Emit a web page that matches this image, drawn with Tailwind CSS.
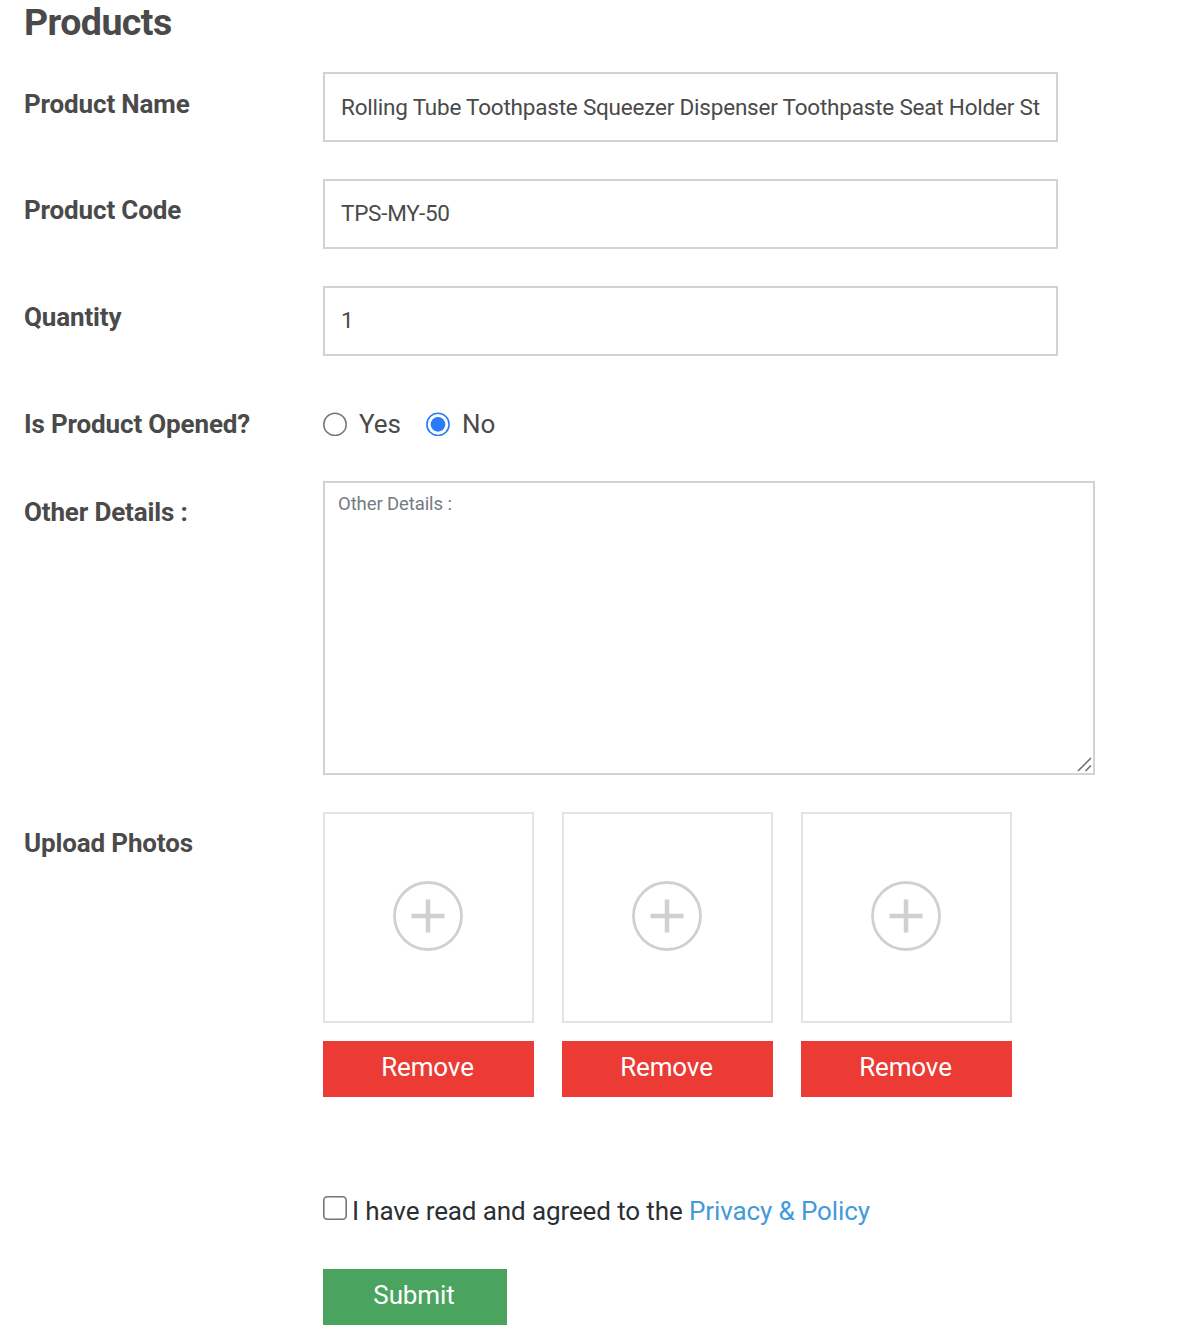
<!DOCTYPE html>
<html lang="en">
<head>
<meta charset="utf-8">
<title>Products</title>
<script src="https://cdn.jsdelivr.net/npm/@tailwindcss/browser@4"></script>
</head>
<body class="bg-white font-['Roboto',sans-serif] text-[#4a4a4a] w-[1188px] h-[1336px] overflow-hidden">
<form class="pl-6 text-[26px] leading-[38px]">
  <h1 class="h-[72px] pt-0.5 text-[37.5px] leading-10 font-bold tracking-[-0.55px]">Products</h1>
  <div class="flex h-[107px]">
    <label class="w-[299px] pt-[13px] font-bold tracking-[-0.15px]">Product Name</label>
    <div class="w-[735px] h-[70px] border-2 border-[#d2d2d2] px-4 text-[22.5px] leading-[66px] tracking-[-0.21px] whitespace-nowrap overflow-hidden">Rolling Tube Toothpaste Squeezer Dispenser Toothpaste Seat Holder St</div>
  </div>
  <div class="flex h-[107px]">
    <label class="w-[299px] pt-3 font-bold tracking-[-0.15px]">Product Code</label>
    <div class="w-[735px] h-[70px] border-2 border-[#d2d2d2] px-4 text-[22.5px] leading-[64px] tracking-[-0.25px]">TPS-MY-50</div>
  </div>
  <div class="flex h-[107px]">
    <label class="w-[299px] pt-3 font-bold tracking-[-0.15px]">Quantity</label>
    <div class="w-[735px] h-[70px] border-2 border-[#d2d2d2] px-4 text-[22.5px] leading-[64px] tracking-[-0.21px]">1</div>
  </div>
  <div class="flex h-[88px]">
    <span class="w-[299px] pt-3 font-bold tracking-[-0.15px]">Is Product Opened?</span>
    <label class="flex pt-3 w-[103px]"><svg class="w-6 h-6 mt-[7px] mr-3" viewBox="0 0 24 24"><circle cx="12" cy="12.400" r="11.2" fill="#fff" stroke="#767676" stroke-width="1.5"/></svg>Yes</label>
    <label class="flex pt-3"><svg class="w-6 h-6 mt-[7px] mr-3" viewBox="0 0 24 24"><circle cx="12" cy="12.400" r="11.1" fill="#fff" stroke="#2b7af8" stroke-width="1.6"/><circle cx="12" cy="12.400" r="7.3" fill="#2b7af8"/></svg>No</label>
  </div>
  <div class="flex h-[331px]">
    <label class="w-[299px] pt-3 font-bold tracking-[-0.15px]">Other Details :</label>
    <div class="w-[772px] h-[294px] border-2 border-[#d2d2d2] px-[13px] py-[7px] text-[18.5px] leading-7 tracking-[-0.1px] text-[#747b82] flex justify-between">Other Details :<svg class="w-4 h-4 self-end -mr-3 -mb-1.5" viewBox="0 0 16 16"><path d="M2 15L15 2M9.500 15L15 9.500" stroke="#707070" stroke-width="1.6"/></svg></div>
  </div>
  <div class="flex h-[380px]">
    <span class="w-[299px] pt-3 font-bold tracking-[-0.15px]">Upload Photos</span>
    <div class="flex gap-7 text-white">
      <div class="w-[211px]"><div class="h-[211px] border-2 border-[#e1e3e7] flex items-center justify-center pb-[3px] pr-0.5"><svg class="w-[70px] h-[70px]" viewBox="0 0 70 70" fill="none" stroke="#d0d0d0"><circle cx="35" cy="35" r="33.5" stroke-width="2.8"/><path d="M18.500 35h33M35 18.500v33" stroke-width="4.5"/></svg></div><button type="button" class="block mt-[18px] w-full h-[56px] bg-[#eb3b34] pb-1 pr-0.5 tracking-[-0.15px]">Remove</button></div>
      <div class="w-[211px]"><div class="h-[211px] border-2 border-[#e1e3e7] flex items-center justify-center pb-[3px] pr-0.5"><svg class="w-[70px] h-[70px]" viewBox="0 0 70 70" fill="none" stroke="#d0d0d0"><circle cx="35" cy="35" r="33.5" stroke-width="2.8"/><path d="M18.500 35h33M35 18.500v33" stroke-width="4.5"/></svg></div><button type="button" class="block mt-[18px] w-full h-[56px] bg-[#eb3b34] pb-1 pr-0.5 tracking-[-0.15px]">Remove</button></div>
      <div class="w-[211px]"><div class="h-[211px] border-2 border-[#e1e3e7] flex items-center justify-center pb-[3px] pr-0.5"><svg class="w-[70px] h-[70px]" viewBox="0 0 70 70" fill="none" stroke="#d0d0d0"><circle cx="35" cy="35" r="33.5" stroke-width="2.8"/><path d="M18.500 35h33M35 18.500v33" stroke-width="4.5"/></svg></div><button type="button" class="block mt-[18px] w-full h-[56px] bg-[#eb3b34] pb-1 pr-0.5 tracking-[-0.15px]">Remove</button></div>
    </div>
  </div>
  <div class="ml-[299px] h-[77px] flex text-[#2b2f33] whitespace-pre tracking-[-0.11px]"><svg class="w-6 h-6 mt-1 mr-[5px]" viewBox="0 0 24 24"><rect x="0.8" y="0.8" width="22.4" height="22.4" rx="3.5" fill="#fff" stroke="#767676" stroke-width="1.6"/></svg><span>I have read and agreed to the <a class="text-[#439ada]">Privacy &amp; Policy</a></span></div>
  <button type="button" class="block ml-[299px] w-[184px] h-[56px] bg-[#4aa45f] text-white pb-1 pr-0.5 tracking-[-0.1px]">Submit</button>
</form>
</body>
</html>
